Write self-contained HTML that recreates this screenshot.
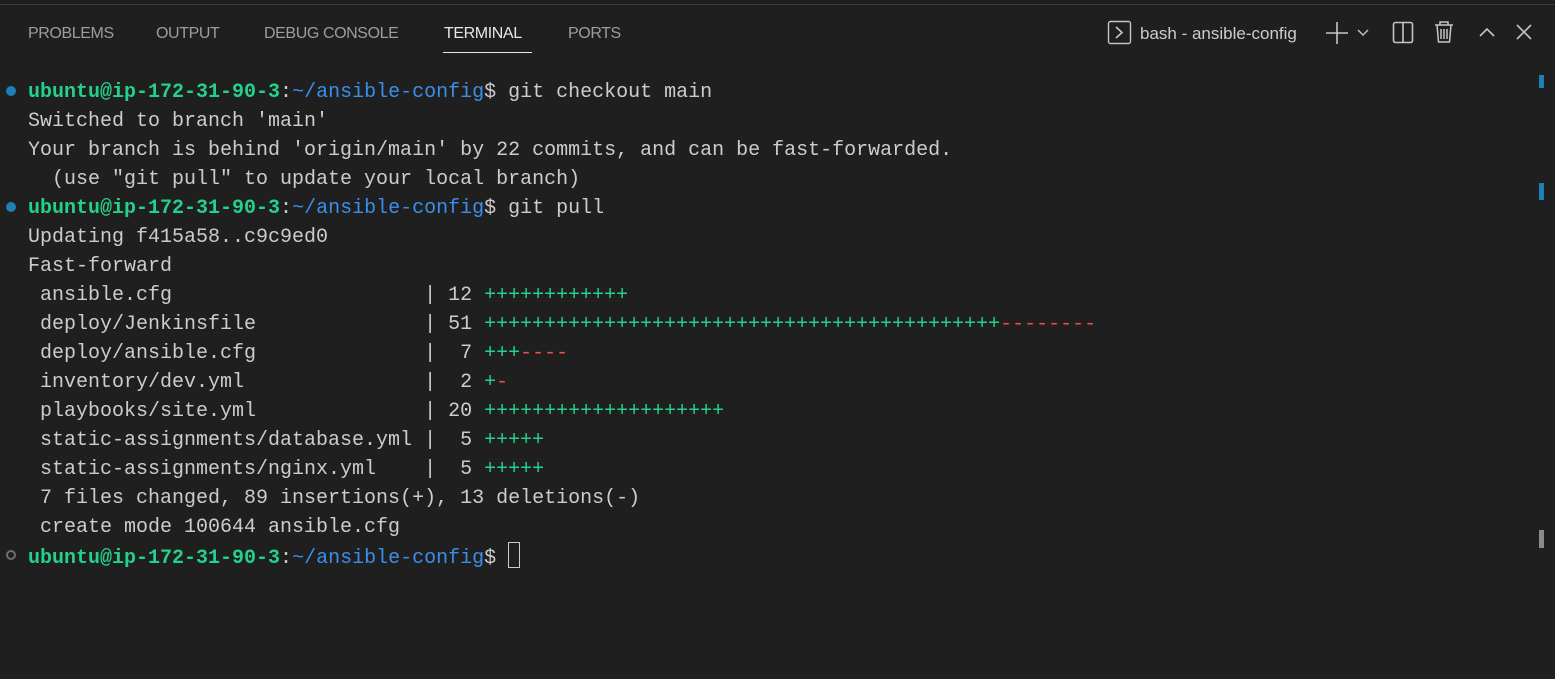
<!DOCTYPE html>
<html><head><meta charset="utf-8"><style>
html,body{margin:0;padding:0;background:#1f1f1f;width:1555px;height:679px;overflow:hidden;position:relative}
.top{position:absolute;left:0;top:0;width:1555px;height:4px;background:#1f1f1f;border-bottom:1px solid #3a3a3a}
.tab{position:absolute;top:25px;font:16px "Liberation Sans",sans-serif;color:#9d9d9d;letter-spacing:-0.4px}
.act{color:#e7e7e7}
.ul{position:absolute;left:443px;top:52px;width:89px;height:1px;background:#e7e7e7}
.term{position:absolute;left:28px;top:78px;font:20px/29px "Liberation Mono",monospace;color:#cccccc;white-space:pre}
.g{color:#23d18b;font-weight:bold}.b{color:#3b8eea}.p{color:#23d18b}.m{color:#f14c4c}
.dot{position:absolute;left:6px;width:10px;height:10px;border-radius:50%;box-sizing:border-box}
.sm{position:absolute;left:1539px;width:5px;background:#1b80b2}
.cur{display:inline-block;width:10px;height:24px;border:1px solid #cccccc;vertical-align:-5px}
</style></head><body>
<div class="top"></div>
<div class="tab" style="left:28px">PROBLEMS</div>
<div class="tab" style="left:156px">OUTPUT</div>
<div class="tab" style="left:264px">DEBUG CONSOLE</div>
<div class="tab act" style="left:444px">TERMINAL</div>
<div class="tab" style="left:568px">PORTS</div>
<div class="ul"></div>
<svg style="position:absolute;left:1100px;top:16px" width="440" height="34" viewBox="0 0 440 34">
<rect x="8.5" y="5.5" width="22" height="22" rx="2" fill="none" stroke="#c5c5c5" stroke-width="1.4"/>
<path d="M16 11l6 5.5-6 5.5" fill="none" stroke="#c5c5c5" stroke-width="1.6"/>
<text x="40" y="23" font-family="Liberation Sans,sans-serif" font-size="17" fill="#cccccc">bash - ansible-config</text>
<path d="M237 6v22M226 17h22" stroke="#c5c5c5" stroke-width="1.6"/>
<path d="M258 14l5 5 5-5" fill="none" stroke="#c5c5c5" stroke-width="1.4"/>
<rect x="293.5" y="6.5" width="19" height="20" rx="2" fill="none" stroke="#c5c5c5" stroke-width="1.6"/>
<path d="M303 7v19" stroke="#c5c5c5" stroke-width="1.6"/>
<path d="M335 9h18M340 9V6h8v3M337 9l1.5 17h11l1.5-17M341 13v10M344 13v10M347 13v10" fill="none" stroke="#c5c5c5" stroke-width="1.5"/>
<path d="M380 20l7-7 7 7" fill="none" stroke="#c5c5c5" stroke-width="1.6"/>
<path d="M417 9l14 14M431 9l-14 14" stroke="#c5c5c5" stroke-width="1.6"/>
</svg>
<div class="dot" style="top:86px;background:#1b80b2"></div>
<div class="dot" style="top:202px;background:#1b80b2"></div>
<div class="dot" style="top:550px;border:2px solid #6e6e6e"></div>
<div class="sm" style="top:75px;height:13px"></div>
<div class="sm" style="top:183px;height:17px"></div>
<div class="sm" style="top:530px;height:18px;background:#8a8a8a"></div>
<div class="term"><span class="g">ubuntu@ip-172-31-90-3</span>:<span class="b">~/ansible-config</span>$ git checkout main
Switched to branch 'main'
Your branch is behind 'origin/main' by 22 commits, and can be fast-forwarded.
  (use "git pull" to update your local branch)
<span class="g">ubuntu@ip-172-31-90-3</span>:<span class="b">~/ansible-config</span>$ git pull
Updating f415a58..c9c9ed0
Fast-forward
 ansible.cfg                     | 12 <span class="p">++++++++++++</span>
 deploy/Jenkinsfile              | 51 <span class="p">+++++++++++++++++++++++++++++++++++++++++++</span><span class="m">--------</span>
 deploy/ansible.cfg              |  7 <span class="p">+++</span><span class="m">----</span>
 inventory/dev.yml               |  2 <span class="p">+</span><span class="m">-</span>
 playbooks/site.yml              | 20 <span class="p">++++++++++++++++++++</span>
 static-assignments/database.yml |  5 <span class="p">+++++</span>
 static-assignments/nginx.yml    |  5 <span class="p">+++++</span>
 7 files changed, 89 insertions(+), 13 deletions(-)
 create mode 100644 ansible.cfg
<span class="g">ubuntu@ip-172-31-90-3</span>:<span class="b">~/ansible-config</span>$ <span class="cur"></span></div>
</body></html>
